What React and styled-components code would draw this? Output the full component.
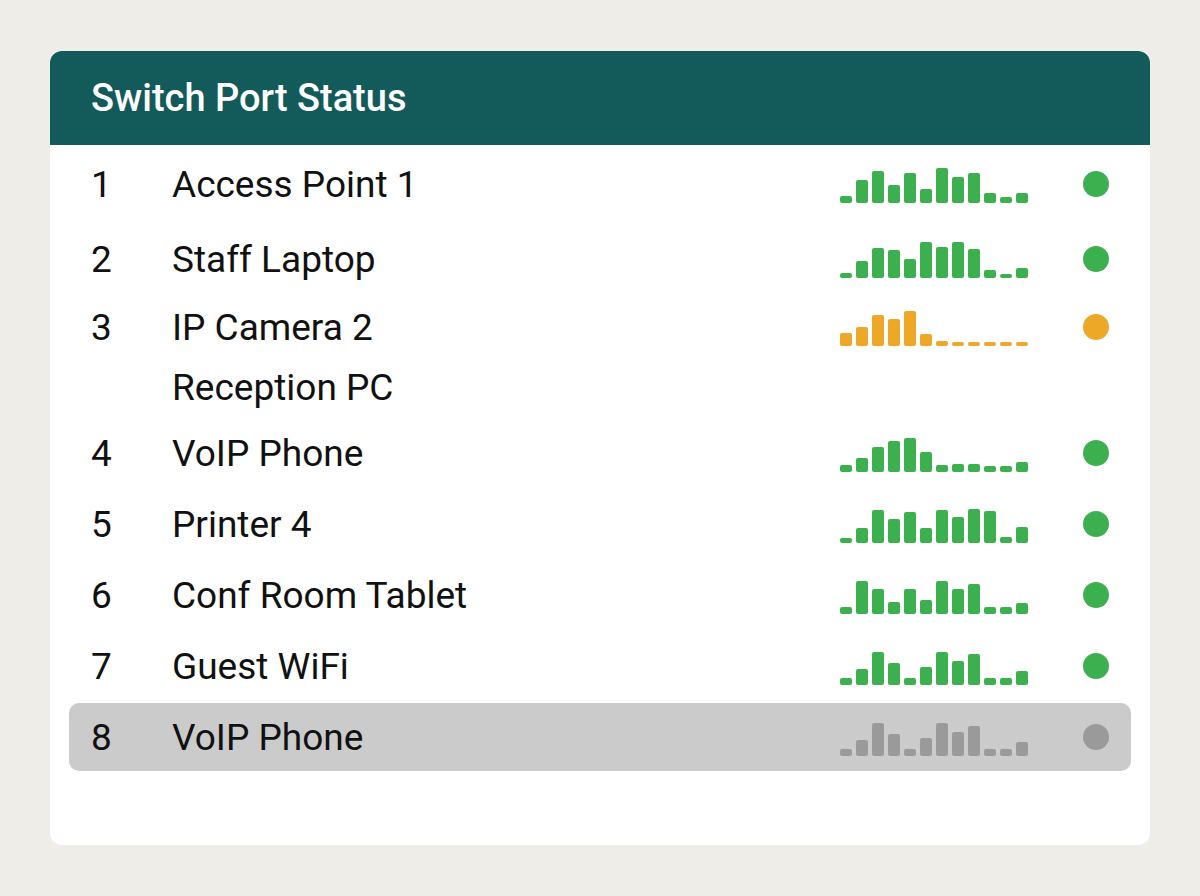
import React from 'react';
import styled, { createGlobalStyle } from 'styled-components';

const GlobalStyle = createGlobalStyle`
    html, body {
        margin: 0;
        padding: 0;
        background: #efede8;
    }
    body {
        font-family: Roboto, "Liberation Sans", sans-serif;
        color: #111;
    }
`;

const Page = styled.div`
    width: 1200px;
    height: 896px;
    padding: 51px 50px;
    box-sizing: border-box;
`;

const Card = styled.div`
    height: 794px;
    background: #fff;
    border-radius: 12px;
    overflow: hidden;
    display: flex;
    flex-direction: column;
`;

const Header = styled.div`
    height: 94px;
    background: #135b5a;
    display: flex;
    align-items: center;
    padding-left: 41px;
    h1 {
        margin: 0;
        font-size: 38px;
        font-weight: 500;
        color: #fff;
    }
`;

const List = styled.ul`
    list-style: none;
    margin: 0;
    padding: 0;
`;

const Row = styled.li`
    display: grid;
    grid-template-columns: 82px 1fr 188px 82px;
    align-items: center;
    height: ${({ h }) => h}px;
    margin: ${({ mt }) => mt || 0}px 19px 0;
    padding: 0 21px;
    border-radius: 10px;
    background: ${({ selected }) => (selected ? '#cbcbcb' : 'transparent')};
    font-size: 37px;
`;

const Num = styled.span`
    padding-left: 1px;
`;

const Name = styled.span`
    white-space: nowrap;
`;

const Bars = styled.div`
    display: flex;
    align-items: flex-end;
    gap: 4px;
    height: 36px;
    transform: translateY(1px);
`;

const Bar = styled.span`
    width: 12px;
    border-radius: 2px;
    background: ${({ color }) => color};
`;

const Dot = styled.span`
    justify-self: end;
    margin-right: 1px;
    width: 26px;
    height: 26px;
    border-radius: 50%;
    background: ${({ color }) => color};
`;

const GREEN = '#3cb04f';
const ORANGE = '#eda828';
const GRAY = '#9a9a9a';

const ports = [
    { n: '1', name: 'Access Point 1', h: 78, color: GREEN, bars: [7, 23, 32, 18, 30, 14, 35, 26, 30, 10, 6, 10] },
    { n: '2', name: 'Staff Laptop', h: 72, color: GREEN, bars: [5, 17, 30, 28, 19, 36, 31, 36, 29, 8, 4, 10] },
    { n: '3', name: 'IP Camera 2', h: 64, color: ORANGE, bars: [13, 19, 31, 27, 35, 12, 5, 4, 4, 4, 4, 4] },
    { n: '', name: 'Reception PC', h: 56 },
    { n: '4', name: 'VoIP Phone', h: 76, color: GREEN, bars: [7, 14, 25, 31, 34, 20, 7, 8, 8, 6, 6, 10] },
    { n: '5', name: 'Printer 4', h: 66, color: GREEN, bars: [5, 15, 33, 24, 31, 15, 33, 26, 34, 32, 6, 16] },
    { n: '6', name: 'Conf Room Tablet', h: 76, color: GREEN, bars: [7, 33, 25, 12, 25, 14, 33, 25, 30, 7, 7, 11] },
    { n: '7', name: 'Guest WiFi', h: 66, color: GREEN, bars: [7, 16, 33, 22, 7, 18, 33, 24, 31, 7, 7, 14] },
    { n: '8', name: 'VoIP Phone', h: 68, mt: 4, selected: true, color: GRAY, bars: [7, 16, 33, 22, 7, 18, 33, 24, 30, 7, 7, 14] },
];

const App = () => {
    return (
        <Page>
            <GlobalStyle />
            <Card>
                <Header>
                    <h1>Switch Port Status</h1>
                </Header>
                <List>
                    {ports.map((p, i) => (
                        <Row key={i} h={p.h} mt={p.mt} selected={p.selected}>
                            <Num>{p.n}</Num>
                            <Name>{p.name}</Name>
                            {p.bars ? (
                                <Bars>
                                    {p.bars.map((b, j) => (
                                        <Bar key={j} color={p.color} style={{ height: b }} />
                                    ))}
                                </Bars>
                            ) : (
                                <span />
                            )}
                            {p.color ? <Dot color={p.color} /> : <span />}
                        </Row>
                    ))}
                </List>
            </Card>
        </Page>
    );
};

export default App;
